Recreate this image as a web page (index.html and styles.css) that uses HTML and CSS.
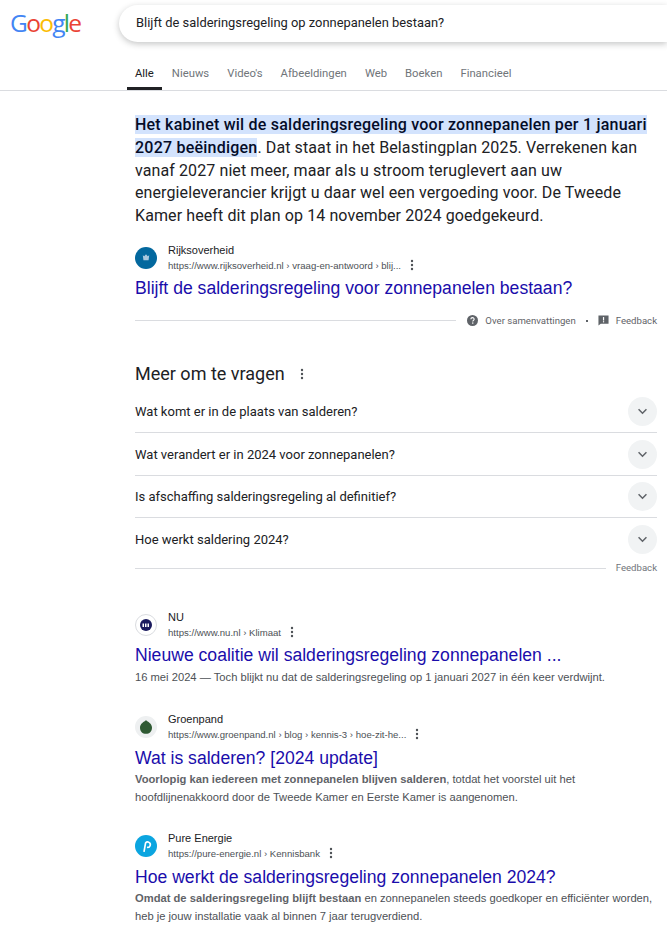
FILE: index.html
```html
<!DOCTYPE html>
<html lang="nl">
<head>
  <meta charset="UTF-8" />
  <title>Blijft de salderingsregeling op zonnepanelen bestaan? - Google Zoeken</title>
  <link rel="stylesheet" href="styles.css">
</head>
<body>
  <!-- Header -->
  <div class="topbar">
    <div class="logo"><span class="blue">G</span><span class="red">o</span><span class="yellow">o</span><span class="blue">g</span><span class="green">l</span><span class="red">e</span></div>
    <div class="searchbox">Blijft de salderingsregeling op zonnepanelen bestaan?</div>
  </div>

  <div class="tabs">
    <a class="tab active">Alle</a>
    <a class="tab">Nieuws</a>
    <a class="tab">Video's</a>
    <a class="tab">Afbeeldingen</a>
    <a class="tab">Web</a>
    <a class="tab">Boeken</a>
    <a class="tab">Financieel</a>
  </div>

  <div class="main">
    <!-- Featured snippet -->
    <p class="snippet"><mark>Het kabinet wil de salderingsregeling voor zonnepanelen per 1 januari 2027 beëindigen</mark>. Dat staat in het Belastingplan 2025. Verrekenen kan vanaf 2027 niet meer, maar als u stroom teruglevert aan uw energieleverancier krijgt u daar wel een vergoeding voor. De Tweede Kamer heeft dit plan op 14 november 2024 goedgekeurd.</p>

    <div class="source first">
      <svg class="favicon" viewBox="0 0 24 24"><circle cx="12" cy="12" r="12" fill="#03689e"/><path d="M8.5 9l1.6 1.2L12 8l1.9 2.2L15.5 9l-.7 5.5H9.2z" fill="#a9c8de"/></svg>
      <div class="source-text">
        <div class="site">Rijksoverheid</div>
        <div class="url">https://www.rijksoverheid.nl › vraag-en-antwoord › blij...
          <svg class="dots" viewBox="0 0 4 12"><circle cx="2" cy="2" r="1.2"/><circle cx="2" cy="6" r="1.2"/><circle cx="2" cy="10" r="1.2"/></svg>
        </div>
      </div>
    </div>
    <a class="title">Blijft de salderingsregeling voor zonnepanelen bestaan?</a>

    <div class="about">
      <div class="about-line"></div>
      <svg class="about-icon" viewBox="0 0 24 24"><circle cx="12" cy="12" r="12" fill="#5f6368"/><path d="M8.4 9.3a3.6 3.6 0 0 1 7.2 0c0 2.4-3.1 2.5-3.1 5" fill="none" stroke="#fff" stroke-width="2.4"/><rect x="11.1" y="16.2" width="2.8" height="2.8" fill="#fff"/></svg>
      <span>Over samenvattingen</span>
      <i class="dot"></i>
      <svg class="about-icon flag" viewBox="0 0 24 24"><path d="M1 1h22v18H6l-5 4z" fill="#5f6368"/><rect x="10.8" y="4.5" width="2.6" height="7.5" fill="#fff"/><rect x="10.8" y="13.5" width="2.6" height="2.6" fill="#fff"/></svg>
      <span>Feedback</span>
    </div>

    <!-- People also ask -->
    <div class="paa-head">Meer om te vragen
      <svg class="dots" viewBox="0 0 4 12"><circle cx="2" cy="2" r="1.2"/><circle cx="2" cy="6" r="1.2"/><circle cx="2" cy="10" r="1.2"/></svg>
    </div>
    <div class="paa-list">
      <div class="paa-row">Wat komt er in de plaats van salderen?<span class="chev"><svg viewBox="0 0 12 8"><path d="M1.5 1.5L6 6l4.5-4.5" fill="none" stroke="#5f6368" stroke-width="1.7"/></svg></span></div>
      <div class="paa-row">Wat verandert er in 2024 voor zonnepanelen?<span class="chev"><svg viewBox="0 0 12 8"><path d="M1.5 1.5L6 6l4.5-4.5" fill="none" stroke="#5f6368" stroke-width="1.7"/></svg></span></div>
      <div class="paa-row">Is afschaffing salderingsregeling al definitief?<span class="chev"><svg viewBox="0 0 12 8"><path d="M1.5 1.5L6 6l4.5-4.5" fill="none" stroke="#5f6368" stroke-width="1.7"/></svg></span></div>
      <div class="paa-row last">Hoe werkt saldering 2024?<span class="chev"><svg viewBox="0 0 12 8"><path d="M1.5 1.5L6 6l4.5-4.5" fill="none" stroke="#5f6368" stroke-width="1.7"/></svg></span></div>
    </div>
    <div class="paa-feedback"><div class="about-line"></div><span>Feedback</span></div>

    <!-- Results -->
    <div class="result nu">
      <div class="source">
        <span class="favicon-wrap white"><svg class="favicon-small" viewBox="0 0 24 24"><circle cx="12" cy="12" r="12" fill="#1a1a5e"/><path d="M5 16V9h3v7zM10 16V9h3v7zM15 9h3v7h-3z" fill="#fff"/></svg></span>
        <div class="source-text">
          <div class="site">NU</div>
          <div class="url">https://www.nu.nl › Klimaat
            <svg class="dots" viewBox="0 0 4 12"><circle cx="2" cy="2" r="1.2"/><circle cx="2" cy="6" r="1.2"/><circle cx="2" cy="10" r="1.2"/></svg>
          </div>
        </div>
      </div>
      <a class="title">Nieuwe coalitie wil salderingsregeling zonnepanelen ...</a>
      <p class="desc">16 mei 2024 — Toch blijkt nu dat de salderingsregeling op 1 januari 2027 in één keer verdwijnt.</p>
    </div>

    <div class="result groen">
      <div class="source">
        <span class="favicon-wrap"><svg class="favicon-leaf" viewBox="0 0 14 16"><path d="M7 0c2 1.500 7 4 7 8.500C14 13 11 16 7 16S0 13 0 8.500C0 4 5 1.500 7 0z" fill="#2f5a33"/></svg></span>
        <div class="source-text">
          <div class="site">Groenpand</div>
          <div class="url">https://www.groenpand.nl › blog › kennis-3 › hoe-zit-he...
            <svg class="dots" viewBox="0 0 4 12"><circle cx="2" cy="2" r="1.2"/><circle cx="2" cy="6" r="1.2"/><circle cx="2" cy="10" r="1.2"/></svg>
          </div>
        </div>
      </div>
      <a class="title">Wat is salderen? [2024 update]</a>
      <p class="desc"><b>Voorlopig kan iedereen met zonnepanelen blijven salderen</b>, totdat het voorstel uit het hoofdlijnenakkoord door de Tweede Kamer en Eerste Kamer is aangenomen.</p>
    </div>

    <div class="result pure">
      <div class="source">
        <svg class="favicon" viewBox="0 0 24 24"><circle cx="12" cy="12" r="12" fill="#0ba5e0"/><path d="M9.800 18.500l1.700-9.700a2.900 2.900 0 1 1 1.600 4.600" fill="none" stroke="#fff" stroke-width="1.800"/></svg>
        <div class="source-text">
          <div class="site">Pure Energie</div>
          <div class="url">https://pure-energie.nl › Kennisbank
            <svg class="dots" viewBox="0 0 4 12"><circle cx="2" cy="2" r="1.2"/><circle cx="2" cy="6" r="1.2"/><circle cx="2" cy="10" r="1.2"/></svg>
          </div>
        </div>
      </div>
      <a class="title">Hoe werkt de salderingsregeling zonnepanelen 2024?</a>
      <p class="desc"><b>Omdat de salderingsregeling blijft bestaan</b> en zonnepanelen steeds goedkoper en efficiënter worden, heb je jouw installatie vaak al binnen 7 jaar terugverdiend.</p>
    </div>
  </div>
</body>
</html>
```

FILE: styles.css
```css
html, body {
  margin: 0;
  height: 929px;
  overflow: hidden;
}
body {
  font-family: Roboto, Arial, sans-serif;
  color: #202124;
  background: #fff;
}
.topbar {
  display: flex;
  align-items: center;
  padding-top: 5px;
  height: 37px;
}
.logo {
  width: 119px;
  padding-left: 10px;
  box-sizing: border-box;
  font-family: "Open Sans", Arial, sans-serif;
  font-size: 24.5px;
  font-weight: 500;
  letter-spacing: -1.7px;
  line-height: 35px;
  margin-top: -2px;
  flex: none;
}
.blue { color: #4285f4; }
.red { color: #ea4335; }
.yellow { color: #fbbc05; }
.green { color: #34a853; }
.searchbox {
  flex: 1;
  height: 37px;
  padding-left: 17px;
  box-sizing: border-box;
  line-height: 36px;
  font-size: 12.9px;
  border-radius: 19px 0 0 19px;
  box-shadow: 0 2px 6px rgba(32, 33, 36, 0.26);
  background: #fff;
}
.tabs {
  display: flex;
  height: 48px;
  padding-left: 127px;
  border-bottom: 1px solid #dadce0;
  align-items: flex-end;
}
.tab {
  height: 38px;
  line-height: 44px;
  padding: 0 8px;
  margin-right: 2px;
  font-size: 11.3px;
  color: #70757a;
  box-sizing: border-box;
}
.tab.active {
  color: #202124;
  border-bottom: 3px solid #202124;
}
.main {
  padding: 23px 10px 0 135px;
}
.snippet {
  margin: 0;
  font-size: 16px;
  letter-spacing: 0.1px;
  line-height: 22.8px;
  color: #202124;
}
mark {
  background: #d3e3fd;
  color: #040c28;
  letter-spacing: 0.22px;
  font-weight: 500;
}
.source {
  display: flex;
  align-items: center;
  gap: 11px;
  height: 30px;
}
.source.first {
  margin-top: 15px;
}
.favicon {
  width: 22px;
  height: 22px;
  flex: none;
}
.favicon-wrap {
  width: 22px;
  height: 22px;
  flex: none;
  border-radius: 50%;
  background: #eef0f1;
  display: flex;
  align-items: center;
  justify-content: center;
}
.favicon-wrap.white {
  background: #fff;
  border: 1px solid #dadce0;
  box-sizing: border-box;
}
.favicon-small {
  width: 12px;
  height: 12px;
}
.favicon-leaf {
  width: 12px;
  height: 14px;
}
.site {
  font-family: "Liberation Sans", Arial, sans-serif;
  font-size: 11px;
  line-height: 15px;
  color: #202124;
}
.url {
  font-family: "Liberation Sans", Arial, sans-serif;
  font-size: 9.6px;
  line-height: 15px;
  color: #4d5156;
  display: flex;
  align-items: center;
  gap: 9px;
}
.dots {
  width: 4px;
  height: 12px;
  fill: #4d5156;
}
.title {
  display: block;
  font-family: "Liberation Sans", Arial, sans-serif;
  font-size: 17.6px;
  line-height: 24px;
  color: #1a0dab;
  margin-top: 3px;
}
.about {
  display: flex;
  align-items: center;
  height: 20px;
  margin-top: 11px;
  font-size: 9.6px;
  color: #5f6368;
}
.about-line {
  flex: 1;
  height: 1px;
  background: #dadce0;
  margin-right: 11px;
}
.about-icon {
  width: 11px;
  height: 11px;
  margin-right: 7px;
}
.dot {
  width: 2px;
  height: 2px;
  background: #5f6368;
  margin: 0 10px;
}
.paa-head {
  display: flex;
  align-items: center;
  gap: 15px;
  margin-top: 31px;
  font-size: 18px;
  line-height: 24px;
}
.paa-list {
  margin-top: 5px;
}
.paa-row {
  display: flex;
  justify-content: space-between;
  align-items: center;
  height: 42.5px;
  box-sizing: border-box;
  font-size: 13px;
  border-bottom: 1px solid #dadce0;
}
.paa-row.last {
  border-bottom: none;
}
.chev {
  width: 29px;
  height: 29px;
  border-radius: 50%;
  background: #f1f3f4;
  display: flex;
  align-items: center;
  justify-content: center;
}
.chev svg {
  width: 11px;
  height: 7px;
}
.paa-feedback {
  display: flex;
  align-items: center;
  margin-top: -1px;
  font-size: 9.6px;
  line-height: 16px;
  color: #70757a;
}
.paa-feedback .about-line {
  margin-right: 10px;
  position: relative;
  top: 1px;
}
.result {
  margin-top: 25px;
}
.result.nu {
  margin-top: 34px;
}
.result.groen {
  margin-top: 26px;
}
.result .title {
  margin-top: 4px;
}
.result.nu .title {
  margin-top: 3px;
}
.desc {
  margin: 0;
  font-family: "Liberation Sans", Arial, sans-serif;
  font-size: 11.2px;
  line-height: 18px;
  color: #4d5156;
}
.result.nu .desc {
  margin-top: 1px;
}
.desc b {
  color: #5f6368;
}
```
